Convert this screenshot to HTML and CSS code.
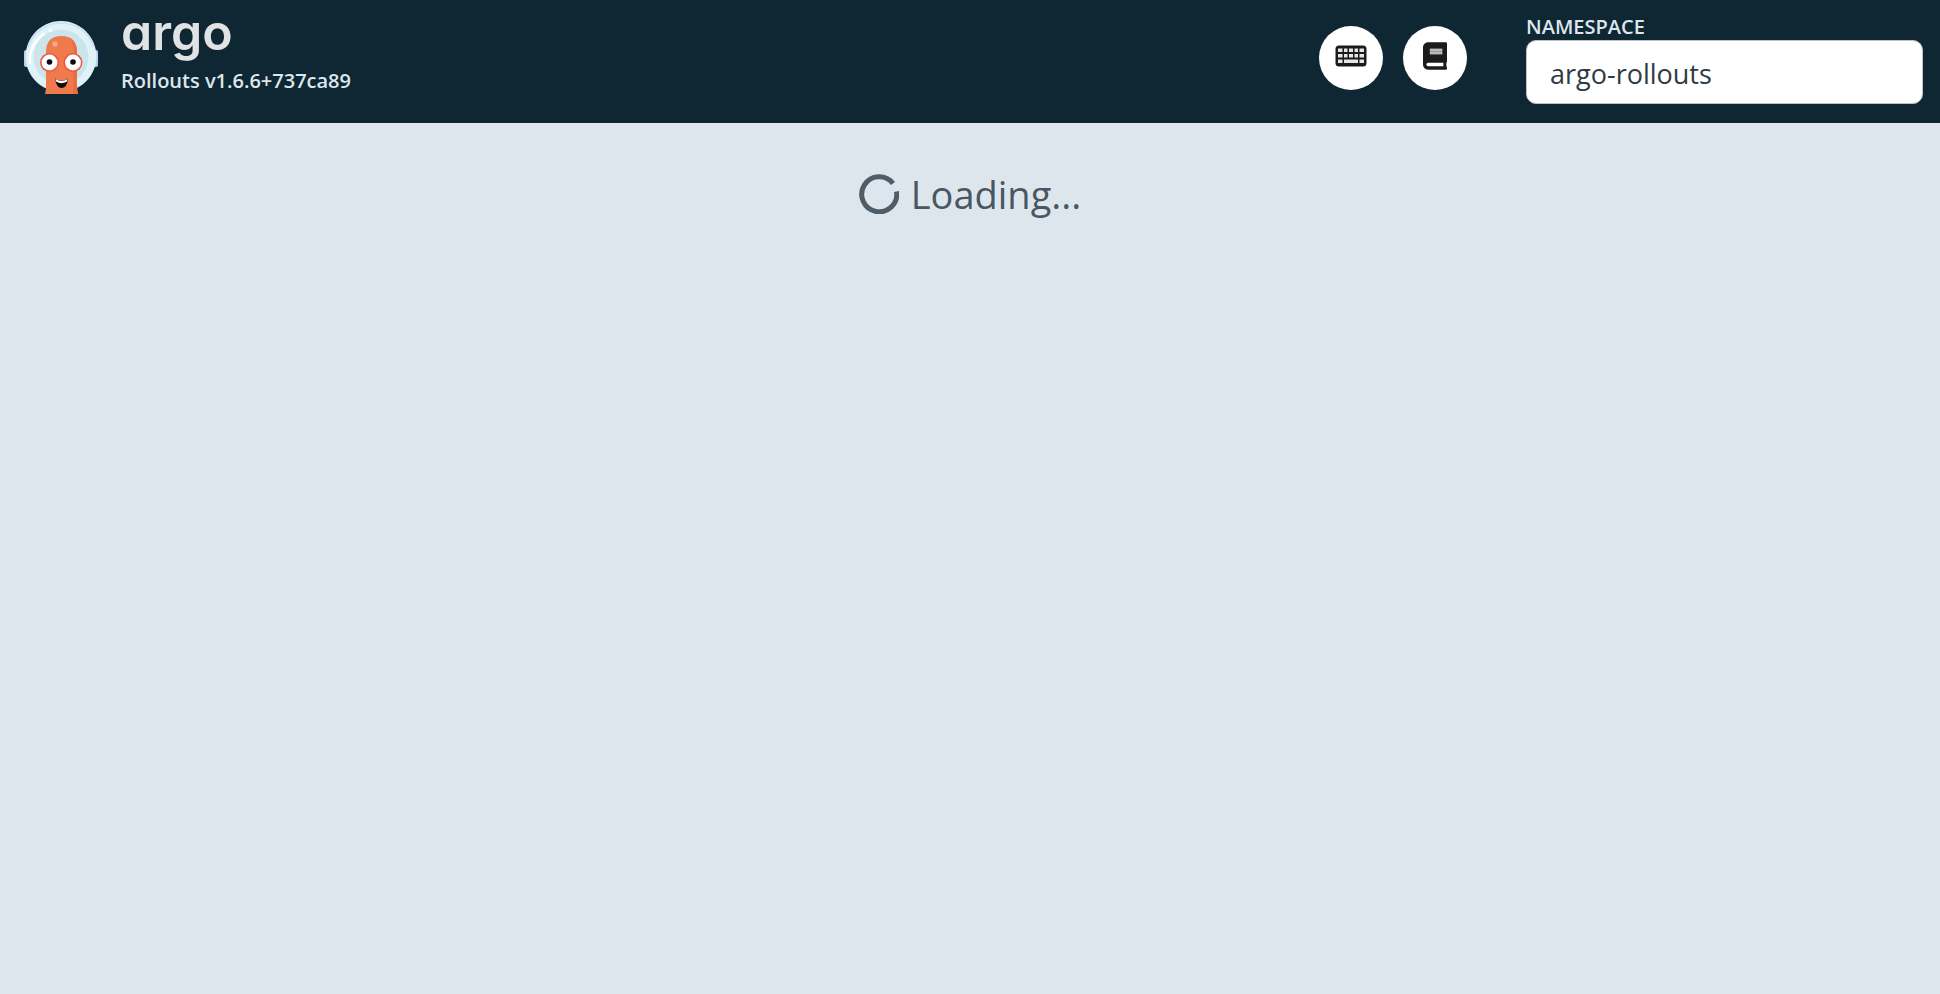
FILE: index.html
```
<!DOCTYPE html>
<html lang="en">
<head>
<meta charset="utf-8">
<title>Argo Rollouts</title>
<link rel="stylesheet" href="styles.css">
</head>
<body>
<header class="header">
  <a class="brand" href="#">
    <svg class="brand-icon" viewBox="0 0 74 74" aria-hidden="true">
      <rect x="0" y="29" width="74" height="17" rx="2" fill="#b9d0ec"/>
      <path d="M21 67A35.400 35.400 0 1 1 53 67Z" fill="#e0f2f7"/>
      <path d="M4 26A34.700 34.700 0 0 1 70 26" fill="none" stroke="#c9dff2" stroke-width="1.500"/>
      <path d="M22 59A27.500 27.500 0 1 1 52 59Z" fill="#cbe5ed"/>
      <path d="M6 42A31 31 0 0 1 20 13" fill="none" stroke="#fff" stroke-width="2.500" stroke-linecap="round"/>
      <circle cx="26.500" cy="9.500" r="1.600" fill="#fff"/>
      <path d="M21 73Q22 70 22 64V31Q22 15 37.500 15Q53 15 53 31V64Q53 70 54 73Z" fill="#f07a4b"/>
      <path d="M46 17Q53 22 53 31V64Q53 70 54 73H49V38Q52 25 46 17Z" fill="#e96d42"/>
      <circle cx="25.500" cy="41.500" r="9.500" fill="#e85c42"/>
      <circle cx="49" cy="41.500" r="9.500" fill="#e85c42"/>
      <circle cx="25.500" cy="41.500" r="7.900" fill="#fff"/>
      <circle cx="49" cy="41.500" r="7.900" fill="#fff"/>
      <circle cx="25.500" cy="41" r="2.800" fill="#0a0a0a"/>
      <circle cx="49" cy="41" r="2.800" fill="#0a0a0a"/>
      <circle cx="31" cy="23" r="2.700" fill="#fabd9f" opacity=".7"/>
      <path d="M31 57.500Q37.500 62 44 57.500Q43 67 37.500 67Q32.500 67 31 57.500Z" fill="#130a08"/>
      <path d="M31.500 58Q37.500 62 43.500 58L43 60.500Q37.500 64 32 60.500Z" fill="#fff"/>
    </svg>
    <span class="brand-text">
      <span class="wordmark">argo</span>
      <span class="version">Rollouts v1.6.6+737ca89</span>
    </span>
  </a>
  <div class="actions">
    <button class="round-button" type="button" aria-label="Keyboard shortcuts">
      <svg width="32" height="22" viewBox="0 0 32 22" aria-hidden="true">
        <rect x="0.500" y="0.500" width="31" height="21" rx="3.500" fill="#1b1b1b"/>
        <path fill="#e6e6e6" d="M3 3.500h4.500v3.500h-4.500zM9 3.500h3.500v3.500h-3.500zM14 3.500h4v3.500h-4zM19.500 3.500h3.500v3.500h-3.500zM24.500 3.500h4.500v3.500h-4.500zM3 9h4.500v3.500h-4.500zM9 9h3.500v3.500h-3.500zM14 9h4v3.500h-4zM19.500 9h3.500v3.500h-3.500zM24.500 9h4.500v3.500h-4.500zM3 14.500h4.500v3.500h-4.500zM9 14.500h14v3.500h-14zM24.500 14.500h4.500v3.500h-4.500z"/>
      </svg>
    </button>
    <button class="round-button" type="button" aria-label="Documentation">
      <svg width="24" height="28" viewBox="0 0 448 512" aria-hidden="true">
        <path fill="#1b1b1b" d="M448 360V24c0-13.300-10.700-24-24-24H96C43 0 0 43 0 96v320c0 53 43 96 96 96h328c13.300 0 24-10.700 24-24v-16c0-7.500-3.500-14.300-8.900-18.700-4.200-15.400-4.200-59.300 0-74.700 5.400-4.300 8.900-11.100 8.900-18.600zM381.400 448H96c-17.700 0-32-14.300-32-32 0-17.600 14.400-32 32-32h285.400c-1.900 17.100-1.900 46.900 0 64z"/>
        <path fill="#9c9c9c" d="M128 116h232v112H128z"/>
        <path fill="#c4c4c4" d="M128 128h232v30H128zM128 188h232v28H128z"/>
      </svg>
    </button>
  </div>
  <div class="namespace">
    <label class="namespace-label" for="namespace">NAMESPACE</label>
    <input class="namespace-input" id="namespace" type="text" value="argo-rollouts">
  </div>
</header>
<main class="content">
  <div class="loading" role="status">
    <svg class="spinner" viewBox="0 0 40 40" aria-hidden="true">
      <path d="M34 9.500A17.500 17.500 0 1 0 37.500 17.500" fill="none" stroke="#4f5d68" stroke-width="5" stroke-linecap="butt"/>
    </svg>
    <span>Loading...</span>
  </div>
</main>
</body>
</html>
```
FILE: styles.css
```
* {
  box-sizing: border-box;
}

body {
  margin: 0;
  min-height: 100vh;
  background: #dee6ed;
  font-family: "Open Sans", "Noto Sans", sans-serif;
}

.header {
  display: flex;
  align-items: flex-start;
  min-height: 123px;
  padding: 16px 17px 19px 24px;
  background: #0f2733;
}

.brand {
  display: flex;
  gap: 23px;
  margin-right: auto;
  color: #dee6ed;
  text-decoration: none;
}

.brand-icon {
  width: 74px;
  height: 74px;
  margin-top: 5px;
}

.brand-text {
  display: flex;
  flex-direction: column;
}

.wordmark {
  height: 50px;
  color: #dfe3e3;
  font-family: Inter, sans-serif;
  font-size: 50px;
  font-weight: 600;
  font-feature-settings: "cv11";
  line-height: 32px;
}

.version {
  font-size: 20px;
  font-weight: 600;
  line-height: 30px;
}

.actions {
  display: flex;
  gap: 20px;
  margin: 10px 59px 0 20px;
}

.round-button {
  display: flex;
  align-items: center;
  justify-content: center;
  width: 64px;
  height: 64px;
  padding: 0 0 4px;
  border: 0;
  border-radius: 50%;
  background: #fff;
}

.namespace {
  display: flex;
  flex-direction: column;
  width: 397px;
}

.namespace-label {
  color: #dee6ed;
  font-size: 20px;
  font-weight: 600;
  line-height: 22px;
  padding-bottom: 2px;
}

.namespace-input {
  width: 100%;
  height: 64px;
  padding: 3px 23px 0;
  border: 1px solid #b9c3c9;
  border-radius: 10px;
  background: #fff;
  color: #303a42;
  font-family: inherit;
  font-size: 27px;
}

.content {
  padding: 44px 20px;
}

.loading {
  display: flex;
  align-items: center;
  justify-content: center;
  gap: 12px;
  color: #495763;
  font-size: 38px;
  line-height: 54px;
}

.spinner {
  width: 40px;
  height: 40px;
}
```
